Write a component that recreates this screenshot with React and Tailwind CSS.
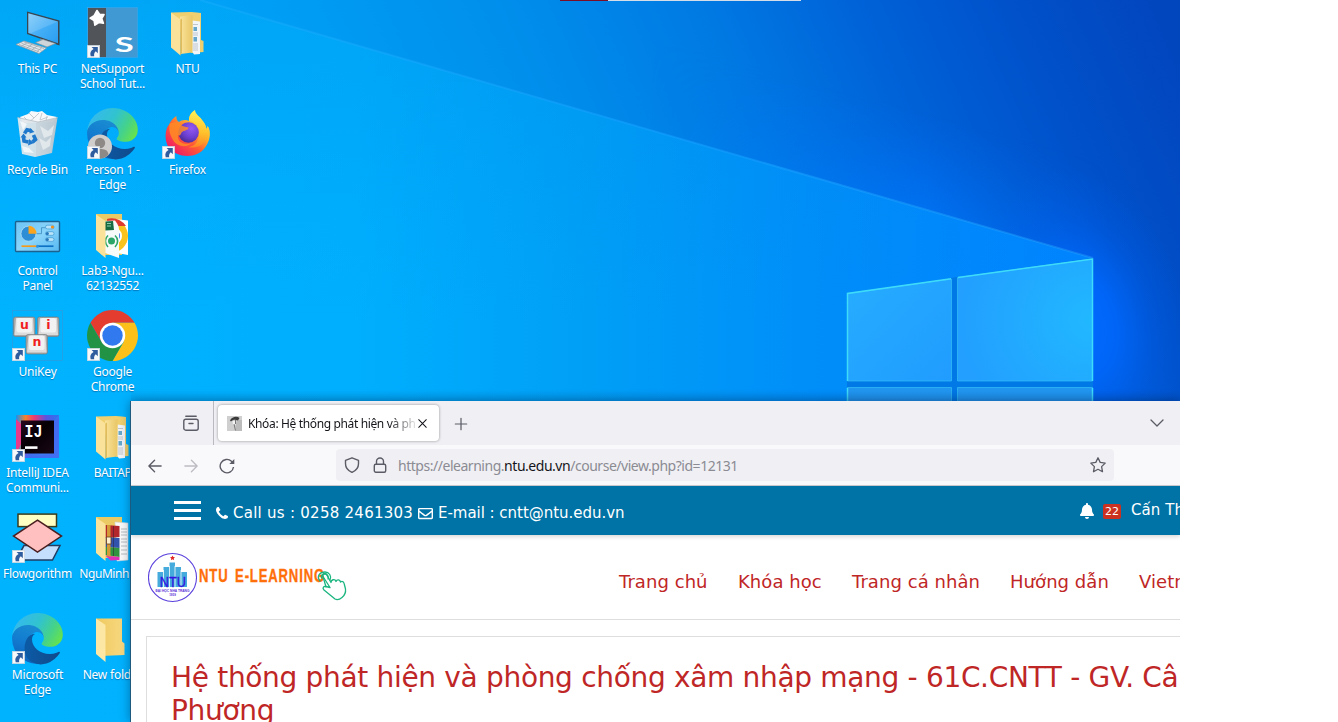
import React from "react";
import { FaRegEnvelope, FaBell } from "react-icons/fa";

const EDGE_WAVE =
  "M235.68 195.46a93.73 93.73 0 0 1-10.54 4.71 101.87 101.87 0 0 1-35.9 6.46c-47.32 0-88.54-32.55-88.54-74.32A31.48 31.48 0 0 1 117.13 105c-42.8 1.8-53.8 46.4-53.8 72.53 0 73.88 68.09 81.37 82.76 81.37 7.91 0 19.84-2.3 27-4.56l1.31-.44a128.34 128.34 0 0 0 66.6-52.8 4 4 0 0 0-5.32-5.64z";
const EDGE_LEFT =
  "M105.73 241.42A79.2 79.2 0 0 1 83 220.08a80.72 80.72 0 0 1 29.49-120c3.2-1.51 8.47-4.1 15.64-4a32.37 32.37 0 0 1 25.69 13 31.88 31.88 0 0 1 6.36 18.66c0-.21 24.46-79.6-80-79.6-43.9 0-80 41.66-80 78.21a130.15 130.15 0 0 0 12.11 56 128 128 0 0 0 156.38 67.11 75.55 75.55 0 0 1-62.78-8z";
const EDGE_TOP =
  "M152.33 148.86c-.81 1-3.3 2.5-3.3 5.66 0 2.61 1.7 5.12 4.72 7.23 14.38 10 41.49 8.68 41.56 8.68a59.56 59.56 0 0 0 30.27-8.35A61.38 61.38 0 0 0 256 109.2c.26-22.41-8-37.31-11.34-43.91C223.46 23.84 177.72 0 128 0A128 128 0 0 0 0 126.2c.48-36.54 36.8-66.05 80-66.05 3.5 0 23.46.34 42 10.07 16.34 8.58 24.9 18.94 30.85 29.21 6.18 10.67 7.28 24.15 7.28 29.52s-2.74 13.33-7.8 19.91z";
const HANDSET =
  "M1600 1240q0 27-10 70.5t-21 68.5q-21 50-122 106-94 51-186 51-27 0-53-3.5t-57.5-12.5-47-14.5-55.5-20.500-49-18q-98-35-175-83-127-79-264-216t-216-264q-48-77-83-175-3-9-18-49t-20.500-55.500-14.500-47-12.500-57.500-3.500-53q0-92 51-186 56-101 106-122 25-11 68.500-21t70.500-10q14 0 21 3 18 6 53 76 11 19 30 54t35 63.500 31 53.500q3 4 17.500 25t21.500 35.500 7 28.500q0 20-28.500 50t-62 55-62 53-28.500 46q0 9 5 22.500t8.500 20.500 14 24 11.500 19q76 137 174 235t235 174q2 1 19 11.500t24 14 20.500 8.500 22.500 5q18 0 46-28.500t53-62 55-62 50-28.500q14 0 28.500 7t35.500 21.500 25 17.500q25 15 53.500 31t63.500 35 54 30q70 35 76 53 3 7 3 21z";

function Svg({ children }) {
  return (
    <svg className="block h-[51px] w-[51px] shrink-0 overflow-visible" viewBox="0 0 51 51">
      {children}
    </svg>
  );
}

function Shortcut() {
  return (
    <g>
      <rect x="0.3" y="38.3" width="12.4" height="12.4" fill="#f6f8fa" stroke="#c9d3dc" strokeWidth=".6" />
      <path d="M4.600 40h6.200v6.200l-2-2c-1.500 1.300-2 2.700-1.600 5H3.700c-1-3.400 0-5.600 2.900-7.200z" fill="#2f5c9e" />
    </g>
  );
}

function ThisPC() {
  return (
    <Svg>
      <defs>
        <linearGradient id="pcs" x1="0" y1="0" x2="1" y2="1">
          <stop offset="0" stopColor="#7cc8f8" />
          <stop offset=".5" stopColor="#43aef6" />
          <stop offset="1" stopColor="#2a9df0" />
        </linearGradient>
      </defs>
      <path d="M15 4.500 47.500 13.500 47.500 38.500 15 27z" fill="#39454f" />
      <path d="M16.300 6.200 46 14.500 46 36.300 16.300 26z" fill="url(#pcs)" />
      <path d="M16.300 6.200 46 14.500 18 26.500 16.300 26z" fill="#fff" opacity=".15" />
      <path d="M28 31.500l6 2 .5 1.500-5 1z" fill="#8b979f" />
      <path d="M23.500 35.500 31 32.500 43.500 36.500 35 40z" fill="#cfd5d9" stroke="#7e8b94" strokeWidth=".6" />
      <path d="M4 37.500 12 34 34.500 41 27 46.500z" fill="#e4e7e9" stroke="#8b969e" strokeWidth=".7" />
      <path d="M7 37.500l20 7.300M9.500 36.300l20 7M12 35l20 6.500M10 39l5.500-3.500M15 41l5.500-4M20 42.700l5.500-4M25 44.500l5-4" stroke="#98a3aa" strokeWidth=".7" />
    </Svg>
  );
}

function NetSupport() {
  return (
    <Svg>
      <rect x="1" y="1" width="18" height="49" fill="#51555a" />
      <rect x="19" y="1" width="31.500" height="49" fill="#4099d2" />
      <rect x=".5" y=".5" width="50" height="50" fill="none" stroke="#3aa5e6" strokeWidth=".8" />
      <path d="M10 3.500l2.500 3.700 4.500.3-2.300 4 1.700 4.700-4.600-.700-3.900 2.700-.8-4.600-4-2.500 3.900-2.300z" fill="#fff" stroke="#fff" strokeWidth="1.600" strokeLinejoin="round" />
      <text x="37.300" y="45" fontSize="20.500" fontWeight="700" textAnchor="middle" fill="#fff" textLength="19" lengthAdjust="spacingAndGlyphs" fontFamily="Lato, sans-serif">S</text>
      <Shortcut />
    </Svg>
  );
}

function FolderBack({ x = 9, w = 26 }) {
  return <path d={`M${x} 5h${w}v41H${x + 6}L${x} 40z`} fill="#ecca63" />;
}

function FolderDocs() {
  return (
    <Svg>
      <defs>
        <linearGradient id="fd" x1="0" x2="1">
          <stop offset="0" stopColor="#fae39a" />
          <stop offset="1" stopColor="#e9c767" />
        </linearGradient>
      </defs>
      <path d="M9 5.500 29 5 35 5.500 39 6v27l2.500 1v11l-12 1z" fill="#efcf6e" />
      <path d="M30.500 13.500l7.500 1V47l-6 .5-2-3z" fill="#f1f5f8" />
      <path d="M31.500 20h3.500v4h-3.500zM31.500 30h3.500v4.500h-3.500z" fill="#2c86b6" opacity=".7" />
      <path d="M31 17.500h5M31 26h5M31 28h5M31 37h5M31 39h5M31 41h5M31 43h5" stroke="#b3bac0" strokeWidth=".8" />
      <path d="M18 9.500 30.500 8v37.500l-12 1.500z" fill="url(#fd)" />
      <path d="M9 5.500l9.500 7v36L9 40.500z" fill="#fbe29a" />
      <path d="M18.500 12.500l1.200-1v34.500l-1.200 2.500z" fill="#d6ad45" />
    </Svg>
  );
}

function FolderPlain() {
  return (
    <Svg>
      <defs>
        <linearGradient id="fp" x1="0" x2="1">
          <stop offset="0" stopColor="#efc95f" />
          <stop offset="1" stopColor="#f8d981" />
        </linearGradient>
      </defs>
      <path d="M9 5.500h26v23l2.500 2v11.500L14 43z" fill="url(#fp)" />
      <path d="M9 5.500l9.500 6.500v37L9 41z" fill="#fde7a4" />
    </Svg>
  );
}

function FolderLab() {
  return (
    <Svg>
      <FolderBack />
      <path d="M28 10l13 1.500v34.500l-11-2z" fill="#fff" />
      <clipPath id="labc"><path d="M20 5h21v41H20z" /></clipPath>
      <g clipPath="url(#labc)">
        <circle cx="24.500" cy="27" r="16.500" fill="#f9c31f" />
        <path d="M10 18a17 17 0 0 1 29-1H25z" fill="#dd3a30" />
        <circle cx="26.500" cy="27" r="8.500" fill="#fff" />
        <circle cx="26.500" cy="27" r="6.500" fill="#3b78e7" />
      </g>
      <path d="M18 12l10-.5c3 4 4 6 4 9V49L18 44z" fill="#f6faf8" />
      <path d="M18 12.500l8-.5 1 9-9 .5z" fill="#166b43" />
      <path d="M20 14.500h4M20 17h4" stroke="#8fd0ae" strokeWidth="1" />
      <circle cx="24.500" cy="32" r="3.500" fill="#2ba668" />
      <path d="M21 26.500c-3.500 3-3.500 8 0 11.500M28 26.500c3.500 3 3.500 8 0 11.500" fill="none" stroke="#2ba668" strokeWidth="1.600" />
      <path d="M9 5.500l9.500 6.500v37L9 41z" fill="#fbe29a" />
    </Svg>
  );
}

function FolderArchive() {
  return (
    <Svg>
      <FolderBack />
      <path d="M28 10l13 1v37l-11 1z" fill="#fafafa" stroke="#cfd4d8" strokeWidth=".6" />
      <path d="M34 17h6M34 20h6M34 23h6M34 27h6M34 30h6M34 34h6M34 38h6M34 42h6" stroke="#a5adb3" strokeWidth=".8" />
      <path d="M18.500 13l14 1v11l-14 1z" fill="#b3262b" />
      <path d="M18.500 25l14 1v10l-14-1z" fill="#3253ad" />
      <path d="M18.500 35l14 1v9l-14-2z" fill="#2f9340" />
      <path d="M18.500 43.500l14 1.500v3l-9 .5z" fill="#dd32b5" />
      <path d="M20 13h3.500v32l-3.500-1z" fill="#d49a37" />
      <path d="M26.500 14v30" stroke="#2b1a33" strokeWidth=".8" opacity=".6" />
      <path d="M19.500 25h4.500v7h-4.500z" fill="#fff1cd" stroke="#6b3c19" strokeWidth=".8" />
      <path d="M9 5.500l9.500 6.500v37L9 41z" fill="#fbe29a" />
    </Svg>
  );
}

function RecycleBin() {
  return (
    <Svg>
      <defs>
        <linearGradient id="rb" x1="0" x2="1">
          <stop offset="0" stopColor="#e4eaee" />
          <stop offset=".5" stopColor="#dfe4e8" />
          <stop offset="1" stopColor="#b5bfc7" />
        </linearGradient>
      </defs>
      <path d="M8 9l8-3 3-3 7 1 4-1 5 4 10 2-4 5-30 1z" fill="#f7f8f9" />
      <path d="M17 5l5 5 5-5M30 5l-2 7 8-3M12 9l5 5 5-4M35 8l-1 5" fill="none" stroke="#c3cbd1" strokeWidth="1" />
      <path d="M5.500 9.500l21 4.500 19-4-5.500 35-17 4-13-3z" fill="url(#rb)" opacity=".93" />
      <path d="M24 14.500v34l15-4 6-34z" fill="#c5ced5" opacity=".55" />
      <path d="M28 18l8 5 6-6-2 10-8 3zM27 30l7 4 5-5-1 9-7 4z" fill="#e9edf0" opacity=".8" />
      <path d="M8 13l7 3-4 6zM10 38l7 2 5 5-10-1z" fill="#fff" opacity=".7" />
      <path d="M5.500 9.500 26 14l20-4.500" fill="none" stroke="#aeb9c1" strokeWidth=".7" />
      <g fill="none" stroke="#1e78cc" strokeWidth="3.600">
        <path d="M12.500 25.500l2.500-3.700 4.500 1" />
        <path d="M21.500 27l2 4.500-3 2.500" />
        <path d="M16.500 34l-4.500-1-.5-4" />
      </g>
      <path d="M18 20l4.500 4-5 1.600zM17 31l-1 6.500 6-2.500zM8.500 29.500l3-4 3 4z" fill="#1e78cc" />
    </Svg>
  );
}

function Edge({ id, person }) {
  return (
    <Svg>
      <defs>
        <linearGradient id={id + "a"} x1=".1" y1=".5" x2="1" y2=".6">
          <stop offset="0" stopColor="#0c59a4" />
          <stop offset="1" stopColor="#114a8b" />
        </linearGradient>
        <linearGradient id={id + "b"} x1=".6" y1="0" x2=".3" y2="1">
          <stop offset="0" stopColor="#1b8ed2" />
          <stop offset=".5" stopColor="#127bd0" />
          <stop offset="1" stopColor="#0d5fb8" />
        </linearGradient>
        <linearGradient id={id + "c"} x1="0" y1=".3" x2="1" y2=".7">
          <stop offset="0" stopColor="#35b9f0" />
          <stop offset=".45" stopColor="#31c3cf" />
          <stop offset=".75" stopColor="#45d28a" />
          <stop offset="1" stopColor="#67e24c" />
        </linearGradient>
      </defs>
      <g transform="scale(.1985)">
        <path d={EDGE_LEFT} fill={`url(#${id}b)`} />
        <path d={EDGE_WAVE} fill={`url(#${id}a)`} />
        <path d={EDGE_TOP} fill={`url(#${id}c)`} />
      </g>
      {person && (
        <g>
          <circle cx="13" cy="38.500" r="12" fill="#d0cecc" />
          <circle cx="13" cy="35" r="5.200" fill="#8d8986" />
          <path d="M4.500 46.500c1-5 4-5.500 8.500-5.500s7.500.5 8.500 5.500c-4 5.500-13 5.500-17 0z" fill="#8d8986" />
        </g>
      )}
      <Shortcut />
    </Svg>
  );
}

function Firefox() {
  return (
    <Svg>
      <defs>
        <linearGradient id="ffa" x1=".85" y1=".1" x2=".15" y2=".9">
          <stop offset="0" stopColor="#fff04f" />
          <stop offset=".3" stopColor="#ffb42a" />
          <stop offset=".6" stopColor="#ff5a35" />
          <stop offset="1" stopColor="#f01b65" />
        </linearGradient>
        <radialGradient id="ffb" cx=".65" cy=".3" r=".75">
          <stop offset="0" stopColor="#9458f2" />
          <stop offset=".6" stopColor="#6b3fd0" />
          <stop offset="1" stopColor="#4a2b93" />
        </radialGradient>
        <linearGradient id="ffc" x1="0" y1="0" x2="0" y2="1">
          <stop offset="0" stopColor="#fff35a" />
          <stop offset=".6" stopColor="#ffc32c" />
          <stop offset="1" stopColor="#ff8a24" />
        </linearGradient>
      </defs>
      <path d="M33 2c-6 4-6 8-6 11-3-2-8-1-10 1-2-1-3-4-2.500-6C10 11 8 14 7.500 16c-5 5-5 17-1 23 9 12 29 12 37 0 6-9 5-17 2-21 0 2-1 3-1 3-1-6-4-8-6-11-2-2-5-4-6.500-8z" fill="url(#ffa)" />
      <path d="M33 2c-6 4-6 8-6 11 6 1 10 5 10 13 0 8-5 13-11 13 9 2 16-2 19-9 3-5 3-9 .5-12 0 2-1 3-1 3-1-6-4-8-6-11-2-2-5-4-5.500-8z" fill="url(#ffc)" opacity=".85" />
      <circle cx="26.500" cy="24.500" r="10.300" fill="url(#ffb)" />
      <path d="M7.500 16c2-1.500 5-2 9.500-1.500 2 3.500 6 4.500 9.500 5 0 3-4.500 3-6.500 4.500-2 2.500-1 4.500-4 3-1 7 6 11 14 8-5 5-15 4-19-3-4-7-4-11-3.500-16z" fill="#ff8b25" opacity=".85" />
      <Shortcut />
    </Svg>
  );
}

function ControlPanel() {
  return (
    <Svg>
      <defs>
        <linearGradient id="cp" x1="0" y1="0" x2="1" y2="1">
          <stop offset="0" stopColor="#6cc4f4" />
          <stop offset=".5" stopColor="#8ad4fa" />
          <stop offset="1" stopColor="#55b9f2" />
        </linearGradient>
      </defs>
      <rect x="3.500" y="12.500" width="44" height="30" rx="1" fill="url(#cp)" stroke="#1d628f" strokeWidth="1.400" />
      <g transform="translate(0 2.700)">
        <circle cx="16.500" cy="22" r="7.500" fill="#2d8ed6" stroke="#cdeafa" strokeWidth=".6" />
        <path d="M16.500 22v-8a8 8 0 0 1 8 8z" fill="#f9a51f" />
        <path d="M24.500 22h5v-6h4M36 16h5" fill="none" stroke="#3b8cc0" strokeWidth=".8" />
        <rect x="33.500" y="13.500" width="8.500" height="3.700" rx="1.800" fill="#b9e3f9" stroke="#2f90cf" strokeWidth=".6" />
        <circle cx="40.500" cy="15.300" r="1.600" fill="#f28c1c" />
        <rect x="33.500" y="20" width="8.500" height="3.700" rx="1.800" fill="#b9e3f9" stroke="#2f90cf" strokeWidth=".6" />
        <circle cx="35.300" cy="21.900" r="1.600" fill="#2779bc" />
        <rect x="33.500" y="26" width="8.500" height="3.700" rx="1.800" fill="#b9e3f9" stroke="#2f90cf" strokeWidth=".6" />
        <circle cx="35.300" cy="27.900" r="1.600" fill="#2779bc" />
        <path d="M9.500 34.500h16" stroke="#f59a1d" strokeWidth="1.700" />
        <path d="M25.500 34.500h16" stroke="#0e72c4" strokeWidth="1.700" />
        <circle cx="25.500" cy="34.500" r="1.500" fill="#2b93df" />
      </g>
    </Svg>
  );
}

function Key({ x, y, ch }) {
  return (
    <g>
      <rect x={x} y={y} width="21.500" height="19.500" rx="2" fill="#a9a8a8" stroke="#77787b" strokeWidth=".6" />
      <path d={`M${x + 1} ${y + 18}l1.500-17h17l1 17z`} fill="#dddcdc" />
      <rect x={x + 3} y={y + 1} width="15.500" height="14.500" rx="2" fill="#f3f2f2" />
      <text x={x + 11} y={y + 11.500} fontSize="12.500" fontWeight="700" textAnchor="middle" fill="#f01f1f" fontFamily="DejaVu Sans, sans-serif">{ch}</text>
    </g>
  );
}

function UniKey() {
  return (
    <Svg>
      <rect x=".5" y=".5" width="50" height="50" fill="none" stroke="#2f9bdc" strokeWidth=".7" />
      <Key x={1.500} y={7} ch="u" />
      <Key x={25.500} y={7} ch="i" />
      <Key x={14} y={24.500} ch="n" />
      <Shortcut />
    </Svg>
  );
}

function Chrome() {
  return (
    <Svg>
      <g transform="translate(25.500 25.500)">
        <path d="M-22.080-12.750A25.500 25.500 0 0 1 22.080-12.750H0L-11 6.400z" fill="#e43d30" />
        <path d="M22.080-12.750A25.500 25.500 0 0 1 0 25.500L11 6.400 0-12.750z" fill="#fbc11a" />
        <path d="M0 25.500A25.500 25.500 0 0 1-22.080-12.750L-11 6.400 11 6.400z" fill="#229344" />
        <circle r="12.700" fill="#fff" />
        <circle r="10.200" fill="#3079ee" />
      </g>
      <Shortcut />
    </Svg>
  );
}

function IntelliJ() {
  return (
    <Svg>
      <defs>
        <linearGradient id="ija" x1="0" y1=".2" x2="1" y2=".8">
          <stop offset="0" stopColor="#f0508a" />
          <stop offset=".3" stopColor="#b446cc" />
          <stop offset=".55" stopColor="#3f6df0" />
          <stop offset="1" stopColor="#3a86f8" />
        </linearGradient>
        <linearGradient id="ijb" x1="0" x2="1">
          <stop offset="0" stopColor="#1c8ff0" />
          <stop offset=".22" stopColor="#f6822a" />
          <stop offset=".42" stopColor="#ee3a74" />
          <stop offset=".7" stopColor="#5a54e0" />
          <stop offset="1" stopColor="#2777f0" />
        </linearGradient>
        <linearGradient id="ijc" x1="0" y1="0" x2="1" y2="1">
          <stop offset="0" stopColor="#29061f" />
          <stop offset=".45" stopColor="#050004" />
          <stop offset="1" stopColor="#1a0716" />
        </linearGradient>
      </defs>
      <rect x="4" y="4" width="43" height="43" fill="url(#ija)" />
      <path d="M4 4h43l-5 6H9.500v34L4 30z" fill="url(#ijb)" />
      <path d="M4 8l5 5v20l-5 10z" fill="#e7398c" />
      <path d="M12 47l30-4.500V10l5-3v40z" fill="#4468f2" opacity=".75" />
      <rect x="9" y="9.500" width="33" height="33" fill="url(#ijc)" />
      <text x="12.500" y="25.500" fontSize="17.500" fontWeight="700" fill="#fff" textLength="18" lengthAdjust="spacingAndGlyphs" fontFamily="Liberation Mono, monospace">IJ</text>
      <rect x="13" y="35.300" width="12.500" height="2.600" fill="#fff" />
      <Shortcut />
    </Svg>
  );
}

function Flowgorithm() {
  return (
    <Svg>
      <g transform="translate(0 .6)">
        <rect x="6" y="1.500" width="38.500" height="12.500" fill="#ffffc3" stroke="#3a3d1c" strokeWidth="1.500" />
        <path d="M12 33h36l-7.500 14.500H4z" fill="#c3dffd" stroke="#223c62" strokeWidth="1.500" />
        <path d="M25.500 7.500 49.500 23.500 25.500 39.500 1.500 23.500z" fill="#ffc0bf" stroke="#4a1f20" strokeWidth="1.500" />
      </g>
      <Shortcut />
    </Svg>
  );
}

function DesktopItem({ icon, lines, tight }) {
  return (
    <div className="flex h-[101px] w-[75px] flex-col items-center pt-[7px]">
      {icon}
      <div className={"pt-[3px] text-center text-[12px] leading-[15px] text-white [text-shadow:0_1px_1px_rgba(0,50,110,.45)] " + (tight ? "tracking-[-0.45px]" : "tracking-[-0.21px]")}>
        {lines.map((l) => (
          <div key={l} className="whitespace-nowrap">{l}</div>
        ))}
      </div>
    </div>
  );
}

const columns = [
  [
    { icon: <ThisPC />, lines: ["This PC"] },
    { icon: <RecycleBin />, lines: ["Recycle Bin"] },
    { icon: <ControlPanel />, lines: ["Control", "Panel"] },
    { icon: <UniKey />, lines: ["UniKey"] },
    { icon: <IntelliJ />, lines: ["IntelliJ IDEA", "Communi..."] },
    { icon: <Flowgorithm />, lines: ["Flowgorithm"] },
    { icon: <Edge id="e1" />, lines: ["Microsoft", "Edge"] },
  ],
  [
    { icon: <NetSupport />, lines: ["NetSupport", "School Tut..."] },
    { icon: <Edge id="e2" person />, lines: ["Person 1 -", "Edge"] },
    { icon: <FolderLab />, lines: ["Lab3-Ngu...", "62132552"] },
    { icon: <Chrome />, lines: ["Google", "Chrome"] },
    { icon: <FolderDocs />, lines: ["BAITAP"], tight: true },
    { icon: <FolderArchive />, lines: ["NguMinhH..."], tight: true },
    { icon: <FolderPlain />, lines: ["New folder"] },
  ],
  [
    { icon: <FolderDocs />, lines: ["NTU"] },
    { icon: <Firefox />, lines: ["Firefox"] },
  ],
];

function Wallpaper() {
  return (
    <svg className="absolute inset-0 h-[722px] w-[1180px]" viewBox="0 0 1180 722">
      <defs>
        <linearGradient id="w1" x1="0" x2="1">
          <stop offset="0" stopColor="#00b3ff" />
          <stop offset=".3" stopColor="#00affe" />
          <stop offset=".5" stopColor="#009ff6" />
          <stop offset=".7" stopColor="#008df9" />
          <stop offset=".9" stopColor="#0084ff" />
          <stop offset="1" stopColor="#0080ff" />
        </linearGradient>
        <linearGradient id="w2" gradientUnits="userSpaceOnUse" x1="200" y1="0" x2="992" y2="-356">
          <stop offset="0" stopColor="#00a2f7" />
          <stop offset=".3" stopColor="#0090ec" />
          <stop offset=".53" stopColor="#0079e3" />
          <stop offset=".7" stopColor="#0061d7" />
          <stop offset=".85" stopColor="#0051ca" />
          <stop offset="1" stopColor="#0246be" />
        </linearGradient>
        <linearGradient id="w3" x1="0" y1="0" x2="0" y2="1">
          <stop offset="0" stopColor="#0079d8" stopOpacity=".35" />
          <stop offset=".45" stopColor="#0090f0" stopOpacity="0" />
        </linearGradient>
        <radialGradient id="w4" gradientUnits="userSpaceOnUse" cx="0" cy="0" r="1" gradientTransform="translate(1082 325) rotate(-12) scale(105 160)">
          <stop offset="0" stopColor="#006aff" />
          <stop offset=".3" stopColor="#0068ff" stopOpacity=".85" />
          <stop offset=".65" stopColor="#0064f8" stopOpacity=".3" />
          <stop offset="1" stopColor="#0060f0" stopOpacity="0" />
        </radialGradient>
        <linearGradient id="w6" gradientUnits="userSpaceOnUse" x1="1000" y1="231" x2="1025" y2="140">
          <stop offset="0" stopColor="#0078ff" stopOpacity=".6" />
          <stop offset="1" stopColor="#0070ff" stopOpacity="0" />
        </linearGradient>
        <linearGradient id="w7" x1="0" x2="1">
          <stop offset="0" stopColor="#fff" stopOpacity="0" />
          <stop offset=".6" stopColor="#fff" stopOpacity="1" />
          <stop offset="1" stopColor="#fff" stopOpacity="0" />
        </linearGradient>
        <mask id="m7"><rect x="650" y="0" width="460" height="300" fill="url(#w7)" /></mask>
        <linearGradient id="ray" gradientUnits="userSpaceOnUse" x1="200" y1="0" x2="1093" y2="258">
          <stop offset="0" stopColor="#20b0ff" stopOpacity=".35" />
          <stop offset=".6" stopColor="#149eff" stopOpacity=".6" />
          <stop offset="1" stopColor="#2aa5ff" stopOpacity=".4" />
        </linearGradient>
        <linearGradient id="p1" x1="0" y1="0" x2="1" y2="1">
          <stop offset="0" stopColor="#26adff" />
          <stop offset="1" stopColor="#209cff" />
        </linearGradient>
        <radialGradient id="p2" cx="1" cy=".5" r="1">
          <stop offset="0" stopColor="#21b8ff" />
          <stop offset="1" stopColor="#229fff" />
        </radialGradient>
        <linearGradient id="shade" x1="0" y1="0" x2="0" y2="1">
          <stop offset="0" stopColor="#003a80" stopOpacity="0" />
          <stop offset="1" stopColor="#003a80" stopOpacity=".12" />
        </linearGradient>
      </defs>
      <rect width="1180" height="722" fill="url(#w1)" />
      <rect width="1180" height="722" fill="url(#w3)" opacity=".6" />
      <path d="M200 0H1180V722H1093V258z" fill="url(#w2)" />
      <path d="M200 0 1093 258 1110 258V0z" fill="url(#w6)" mask="url(#m7)" />
      <path d="M950 60H1180V420H1093V258L850 188z" fill="url(#w4)" />
      <path d="M200 0 1093 258" stroke="url(#ray)" strokeWidth="2" />
      <path d="M847 293 951 278 957 277 1093 258V420H847z" fill="#0078e6" />
      <path d="M847.500 293.500 951.500 279V381H847.500z" fill="url(#p1)" stroke="#35bff5" strokeWidth=".7" />
      <path d="M957.500 277.500 1092.500 259V381H957.500z" fill="url(#p2)" stroke="#35bff5" strokeWidth=".7" />
      <path d="M847.500 387.500H951.500V420H847.500zM957.500 387.500H1092.500V420H957.500z" fill="#2196f0" stroke="#35bff5" strokeWidth=".7" />
      <path d="M847.500 381V293.500L951 278.800M958 277.500 1092.500 259V381M847.500 388V405M1092.500 388V405" fill="none" stroke="#3fdcfa" strokeWidth="1.500" />
      <rect y="390" x="131" width="1049" height="12" fill="url(#shade)" />
      <path d="M560 .5h48" stroke="#7c0d26" />
      <path d="M608 .5h193" stroke="#d5dee8" />
    </svg>
  );
}

function Line({ d, className = "", size = 16, w = 1.200 }) {
  return (
    <svg className={"block shrink-0 " + className} width={size} height={size} viewBox="0 0 16 16" fill="none" stroke="currentColor" strokeWidth={w} strokeLinecap="round" strokeLinejoin="round">
      <path d={d} />
    </svg>
  );
}

function TabStrip() {
  return (
    <div className="flex h-[44px] items-center bg-[#f0f0f4] text-[#5b5b66]">
      <div className="flex h-full w-[83px] items-center border-r border-[#b9b9bf] pl-[52px]">
        <svg width="16" height="16" viewBox="0 0 16 16" fill="none" stroke="currentColor" strokeWidth="1.400" strokeLinecap="round">
          <rect x=".8" y="4.200" width="14.400" height="11" rx="2" />
          <path d="M2.800 1.200h10.400M6 8.500h4" />
        </svg>
      </div>
      <div className="ml-1 flex h-[36px] w-[221px] items-center rounded-[4px] bg-white pl-[9px] text-[#15141a] shadow-[0_0_3px_rgba(0,0,0,.4)]">
        <svg width="15" height="15" viewBox="0 0 15 15">
          <rect width="15" height="15" fill="#cfcfcf" />
          <path d="M9 4h6v11H9z" fill="#bcbcbc" />
          <path d="M3 4.500C5 .5 10 0 12.500 2L11 4.500C8 3 6 3.500 4 5.500z" fill="#3b3b3b" />
          <path d="M5.500 5h4l-1 4H6z" fill="#f3f3f3" />
          <path d="M7 8l1.500 6.500M8.500 4v4" stroke="#777" />
        </svg>
        <div className="mt-[2px] ml-[6px] w-[168px] overflow-hidden text-[12px] tracking-[-0.36px] whitespace-nowrap [mask-image:linear-gradient(90deg,#000_84%,transparent_102%)]">
          Khóa: Hệ thống phát hiện và phòng
        </div>
        <Line d="M2.500 2.500l11 11M13.500 2.500L2.500 13.500" className="ml-[1px]" size={11} w={1.500} />
      </div>
      <Line d="M8 1.500v13M1.500 8h13" className="mt-[1px] ml-[15px]" size={14} w={1.400} />
      <Line d="M2 5l6 6L14 5" className="mr-[15px] ml-auto" size={16} w={1.300} />
    </div>
  );
}

function Toolbar() {
  return (
    <div className="flex h-[41px] items-center border-b border-[#ccccd0] bg-[#f9f9fb] text-[#5b5b66]">
      <Line d="M15 8H1M7.500 1.500L1 8l6.500 6.500" className="mt-[1px] ml-[17px]" size={14} w={1.500} />
      <Line d="M1 8h14M8.500 1.500L15 8l-6.500 6.500" className="mt-[1px] ml-[22px] text-[#bcbcc2]" size={14} w={1.500} />
      <svg className="mt-[1px] ml-[21px]" width="16" height="16" viewBox="0 0 16 16" fill="none" stroke="currentColor" strokeWidth="1.400">
        <path d="M14.500 9A6.700 6.700 0 1 1 12.500 3.300L14 4.500" />
        <path d="M15.300 1v5h-5z" fill="currentColor" stroke="none" />
      </svg>
      <div className="ml-[101px] flex h-[32px] w-[778px] items-center rounded-[4px] bg-[#f0f0f4] pl-2">
        <Line d="M8 .8l6.500 2.600v3.400c0 4-2.500 6.900-6.500 8.600-4-1.700-6.500-4.600-6.500-8.600V3.400z" w={1.400} />
        <svg className="ml-[12px]" width="16" height="16" viewBox="0 0 16 16" fill="none" stroke="currentColor" strokeWidth="1.400">
          <rect x="2.300" y="7.300" width="11.400" height="8" rx="1.500" />
          <path d="M4.500 7.300V4.500a3.500 3.500 0 0 1 7 0v2.800" />
        </svg>
        <div className="mt-[1px] ml-[10px] text-[14px] tracking-[-0.47px] whitespace-nowrap text-[#8b8b93]">
          https://elearning.<span className="text-[#15141a]">ntu.edu.vn</span>/course/view.php?id=12131
        </div>
        <Line d="M8 .8l2.200 4.600 5 .7-3.600 3.500.9 5.100L8 12.300l-4.500 2.400.9-5.100L.8 6.100l5-.7z" className="mr-2 ml-auto" w={1.300} />
      </div>
    </div>
  );
}

function SiteBar() {
  return (
    <div className="relative flex h-[49px] items-center bg-[#0073a6] font-['DejaVu_Sans',sans-serif] text-[15px] whitespace-nowrap text-white shadow-[0_2px_4px_rgba(0,0,0,.15)]">
      <div className="ml-[43px] flex w-[27px] flex-col gap-[5px]">
        <div className="h-[3px] bg-white" />
        <div className="h-[3px] bg-white" />
        <div className="h-[3px] bg-white" />
      </div>
      <svg className="mt-[4px] ml-[15px] h-3 w-3" viewBox="192 128 1408 1408" fill="currentColor">
        <path d={HANDSET} />
      </svg>
      <span className="mt-[5px] ml-[5px] w-[180px] tracking-[0.26px]">Call us : 0258 2461303</span>
      <FaRegEnvelope className="mt-[5px] ml-[5px] h-[15px] w-[15px]" />
      <span className="mt-[5px] ml-[5px] tracking-[-0.03px]">E-mail : cntt@ntu.edu.vn</span>
      <div className="ml-auto flex w-[101px] shrink-0 items-center">
        <FaBell className="h-[16px] w-[16px] shrink-0" />
        <span className="mt-[2px] ml-[8px] h-[15px] w-[18px] shrink-0 rounded-[2px] bg-[#ca3120] text-center text-[11px] leading-[15px]">22</span>
        <span className="ml-[10px] tracking-[0.1px]">Cấn Thị</span>
      </div>
    </div>
  );
}

function Logo() {
  return (
    <svg className="mt-1 ml-[17px] block shrink-0" width="200" height="54" viewBox="0 0 200 54">
      <circle cx="24.500" cy="25.500" r="24" fill="#fff" stroke="#5a3fdc" strokeWidth="1.100" />
      <path d="M9.500 35V20h6V15h6V10.500h5.500V15h6v5h6v15z" fill="#45abdc" />
      <path d="M15.500 18v17M21.500 14v21M27 14v21M33 18v17" stroke="#fff" strokeWidth=".8" />
      <path d="M24.500 3.500l.8 1.600 1.700.2-1.300 1.200.4 1.700-1.600-.9-1.600.9.4-1.700-1.300-1.200 1.700-.2z" fill="#e22525" />
      <text x="24.800" y="34.500" fontSize="14.500" textAnchor="middle" fill="#3413e0" stroke="#3413e0" strokeWidth=".3" textLength="26" lengthAdjust="spacingAndGlyphs" fontFamily="Liberation Sans, sans-serif">NTU</text>
      <text x="24.500" y="39.800" fontSize="3.600" fontWeight="700" textAnchor="middle" fill="#5a2fd8" textLength="34" lengthAdjust="spacingAndGlyphs" fontFamily="Liberation Sans, sans-serif">ĐẠI HỌC NHA TRANG</text>
      <text x="24.500" y="44" fontSize="3" fontWeight="700" textAnchor="middle" fill="#5a2fd8" fontFamily="Liberation Sans, sans-serif">1959</text>
      <text x="51" y="30.200" fontSize="18.500" fontWeight="700" fill="#ff6f0a" stroke="#ff6f0a" strokeWidth=".35" textLength="126" lengthAdjust="spacingAndGlyphs" letterSpacing="1.200" wordSpacing="3" fontFamily="Liberation Sans, sans-serif">NTU E-LEARNING</text>
      <g fill="none" stroke="#1bb57f" strokeWidth="1.300" strokeLinejoin="round" strokeLinecap="round">
        <path d="M175 24.500c-1-3 2.500-4 3.500-2l4.500 8c0-3 4-4 5-1 1-2.500 4-2 4.500.5 2-1.500 3.500 0 4 3l1 4c.5 4-1 6.500-3.500 8.500-3 2.500-5 2.500-7 1.500l-11-9c-2-2-.5-4 2-3.500l4 1z" />
        <path d="M178 35l-3-10.500" />
        <path d="M172 29c-4-5 0-9 5-9 4 0 7 4 5 8" />
        <path d="M174 26.500c-2-3 .5-4.500 3-4.500s4 2.500 3 5" />
      </g>
    </svg>
  );
}

const nav = [
  { label: "Trang chủ", w: "w-[89px]" },
  { label: "Khóa học", w: "w-[84px]" },
  { label: "Trang cá nhân", w: "w-[128px]" },
  { label: "Hướng dẫn", w: "w-[99px]" },
  { label: "Vietnamese", w: "w-[110px]" },
];

function Page() {
  return (
    <div className="flex-1 overflow-hidden bg-white font-['DejaVu_Sans',sans-serif] text-[#bf2626]">
      <div className="flex h-[85px] items-center border-b border-[#dedede]">
        <Logo />
        <nav className="ml-[271px] flex gap-[30px] pt-[9px] text-[18px] tracking-[0.06px] whitespace-nowrap">
          {nav.map((n) => (
            <span key={n.label} className={n.w + " shrink-0"}>{n.label}</span>
          ))}
        </nav>
      </div>
      <div className="mt-4 ml-[15px] h-[200px] w-[1100px] border border-[#dedede] pt-[25px] pl-6 text-[28px] leading-[32.500px] tracking-[-0.32px] whitespace-nowrap">
        <div>Hệ thống phát hiện và phòng chống xâm nhập mạng - 61C.CNTT - GV. Cân</div>
        <div>Phương</div>
      </div>
    </div>
  );
}

export default function App() {
  return (
    <div className="h-[722px] w-[1338px] overflow-hidden bg-white font-['Noto_Sans','Open_Sans',sans-serif]">
      <div className="relative h-[722px] w-[1180px] overflow-hidden">
        <Wallpaper />
        <div className="relative flex">
          {columns.map((c, i) => (
            <div key={i} className="flex flex-col">
              {c.map((it) => (
                <DesktopItem key={it.lines.join()} {...it} />
              ))}
            </div>
          ))}
        </div>
        <div className="absolute top-[401px] left-[130px] flex h-[321px] w-[1050px] flex-col overflow-hidden border-l border-[#1d5a80] shadow-[0_0_10px_rgba(0,20,50,.4)]">
          <TabStrip />
          <Toolbar />
          <SiteBar />
          <Page />
        </div>
      </div>
    </div>
  );
}
